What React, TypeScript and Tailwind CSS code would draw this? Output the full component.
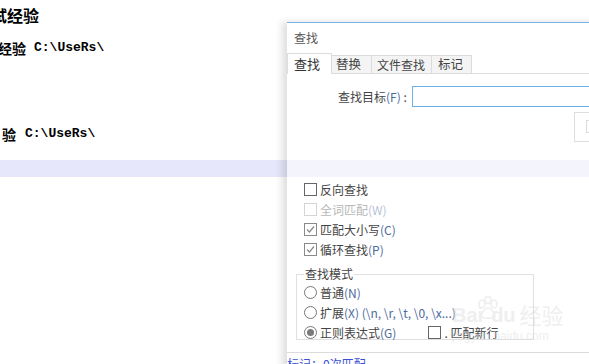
import React from "react";

const cjk = '"Noto Sans CJK SC", "Noto Sans", sans-serif';

function Check({ checked, disabled }: { checked?: boolean; disabled?: boolean }) {
  return (
    <span
      className={`relative inline-block h-[13px] w-[13px] shrink-0 border bg-white ${
        disabled ? "border-[#d4d4d4]" : checked ? "border-[#8a8a8a]" : "border-[#666]"
      }`}
    >
      {checked && (
        <svg className="absolute left-[1px] top-[1px]" width="9" height="9" viewBox="0 0 9 9">
          <polyline points="1,4.5 3.5,7 8,1.5" fill="none" stroke="#8a8a8a" strokeWidth="1.2" />
        </svg>
      )}
    </span>
  );
}

function Radio({ on }: { on?: boolean }) {
  return (
    <span className="flex h-[13px] w-[13px] shrink-0 items-center justify-center rounded-full border border-[#777] bg-white">
      {on && <span className="h-[7px] w-[7px] rounded-full bg-[#7a7a7a]" />}
    </span>
  );
}

const Acc = ({ children, light }: { children: React.ReactNode; light?: boolean }) => (
  <span className={light ? "text-[#b8c2d6]" : "text-[#4d6a9c]"}>{children}</span>
);

export default function App() {
  return (
    <div
      className="relative h-[364px] w-[589px] overflow-hidden bg-white"
      style={{ fontFamily: cjk }}
    >
      {/* editor text */}
      <div className="flex flex-col text-black">
        <div className="ml-[-9px] mt-[5px] h-[20px] text-[16px] font-bold leading-[20px]">试经验</div>
        <div className="ml-[-2px] mt-[14px] flex h-[18px] items-center text-[14px] font-bold leading-[18px]">
          <span>经验</span>
          <span className="ml-[8px] text-[13px]" style={{ fontFamily: '"Liberation Mono", monospace' }}>
            C:\UseRs\
          </span>
        </div>
        <div className="ml-[2px] mt-[68px] flex h-[18px] items-center text-[14px] font-bold leading-[18px]">
          <span>验</span>
          <span className="ml-[9px] text-[13px]" style={{ fontFamily: '"Liberation Mono", monospace' }}>
            C:\UseRs\
          </span>
        </div>
        <div className="mt-[17px] h-[17px] w-full bg-[#e7e7fb]" />
      </div>

      {/* find dialog */}
      <div className="absolute left-[287px] top-[22px] flex h-[360px] w-[340px] flex-col border-t-[1.5px] border-[#74b3e8] bg-white text-[12px] text-[#444] shadow-[-5px_0_7px_rgba(0,0,0,0.13)]">
        <div className="flex h-[30px] items-center pl-[7px] text-[#555]">查找</div>
        <div className="relative flex h-[21px] items-end border-b border-[#dcdcdc]">
          <div className="relative -mb-px flex h-[21px] w-[45px] items-center justify-start border border-b-0 border-[#dcdcdc] bg-white pl-[6px] text-[13px] text-[#333]">
            查找
          </div>
          <div className="flex h-[18px] w-[40px] items-center border-r border-t border-[#dcdcdc] bg-[#f4f4f4] pl-[4px] text-[12.5px]">
            替换
          </div>
          <div className="flex h-[18px] w-[60px] items-center border-r border-t border-[#dcdcdc] bg-[#f4f4f4] pl-[5px] text-[12px]">
            文件查找
          </div>
          <div className="flex h-[18px] w-[40px] items-center border-r border-t border-[#dcdcdc] bg-[#f4f4f4] pl-[6px] text-[12.5px]">
            标记
          </div>
        </div>

        <div className="mt-[12px] flex items-center">
          <span className="ml-[51px] w-[69px] text-[12px]">
            查找目标<Acc>(F)</Acc> :
          </span>
          <div className="ml-[5px] h-[21px] flex-1 border border-[#6cb0e8] bg-white" />
        </div>
        <div className="mt-[5px] flex">
          <div className="ml-[287px] flex h-[30px] w-[80px] items-start border border-[#dedede] pl-[11px] pt-[7px]">
            <span className="h-[13px] w-[10px] border border-[#dcdcdc]" />
          </div>
        </div>

        <div className="mt-[18px] h-[17px] w-full bg-[#f4f4fd]" />

        <div className="ml-[17px] mt-[6px] flex flex-col gap-[7px]">
          <div className="flex h-[13px] items-center gap-[3px]">
            <Check />
            <span>反向查找</span>
          </div>
          <div className="flex h-[13px] items-center gap-[3px] text-[#b8b8b8]">
            <Check disabled />
            <span>
              全词匹配<Acc light>(W)</Acc>
            </span>
          </div>
          <div className="flex h-[13px] items-center gap-[3px]">
            <Check checked />
            <span>
              匹配大小写<Acc>(C)</Acc>
            </span>
          </div>
          <div className="flex h-[13px] items-center gap-[3px]">
            <Check checked />
            <span>
              循环查找<Acc>(P)</Acc>
            </span>
          </div>
        </div>

        <fieldset className="ml-[9px] mt-[12px] h-[72px] w-[238px] border border-[#e0e0e0] pb-0 pl-[7px] pr-0 pt-0">
          <legend className="px-[1px] text-[12px] leading-[12px]">查找模式</legend>
          <div className="mt-[6px] flex flex-col gap-[7px]">
            <div className="flex h-[13px] items-center gap-[3px]">
              <Radio />
              <span>
                普通<Acc>(N)</Acc>
              </span>
            </div>
            <div className="flex h-[13px] items-center gap-[3px]">
              <Radio />
              <span>
                扩展<Acc>(X) (\n, \r, \t, \0, \x...)</Acc>
              </span>
            </div>
            <div className="flex h-[13px] items-center gap-[3px]">
              <Radio on />
              <span>
                正则表达式<Acc>(G)</Acc>
              </span>
              <span className="ml-[29px] flex items-center gap-[3px]">
                <Check />
                <span>. 匹配新行</span>
              </span>
            </div>
          </div>
        </fieldset>

        <div className="mt-[12px] border-t border-[#dcdcdc] pt-[2px] text-[#3b4fd8]">标记：0次匹配</div>
      </div>

      {/* watermark */}
      <div className="pointer-events-none absolute left-[452px] top-[298px] flex flex-col items-start opacity-40">
        <div className="flex items-center">
          <span className="text-[20px] font-bold text-[#d8d8d8]" style={{ fontFamily: '"Liberation Sans", sans-serif' }}>
            Bai
          </span>
          <svg width="22" height="24" viewBox="0 0 22 24" className="-ml-[6px] -mt-[14px]">
            <g fill="none" stroke="#d6d6d6" strokeWidth="1.6">
              <ellipse cx="5" cy="8" rx="3" ry="4" />
              <ellipse cx="11" cy="4" rx="3" ry="3.5" />
              <ellipse cx="17" cy="8" rx="3" ry="4" />
              <path d="M4 20 Q7 12 11 12 Q15 12 18 20 Q15 23 11 22 Q7 23 4 20 Z" />
            </g>
          </svg>
          <span className="-ml-[8px] text-[20px] font-bold text-[#d8d8d8]" style={{ fontFamily: '"Liberation Sans", sans-serif' }}>
            du
          </span>
          <span className="ml-[4px] text-[22px] text-[#d8d8d8]">经验</span>
        </div>
        <span className="-mt-[4px] text-[12px] text-[#d8d8d8]" style={{ fontFamily: '"Liberation Sans", sans-serif' }}>
          jingyan.baidu.com
        </span>
      </div>
    </div>
  );
}
